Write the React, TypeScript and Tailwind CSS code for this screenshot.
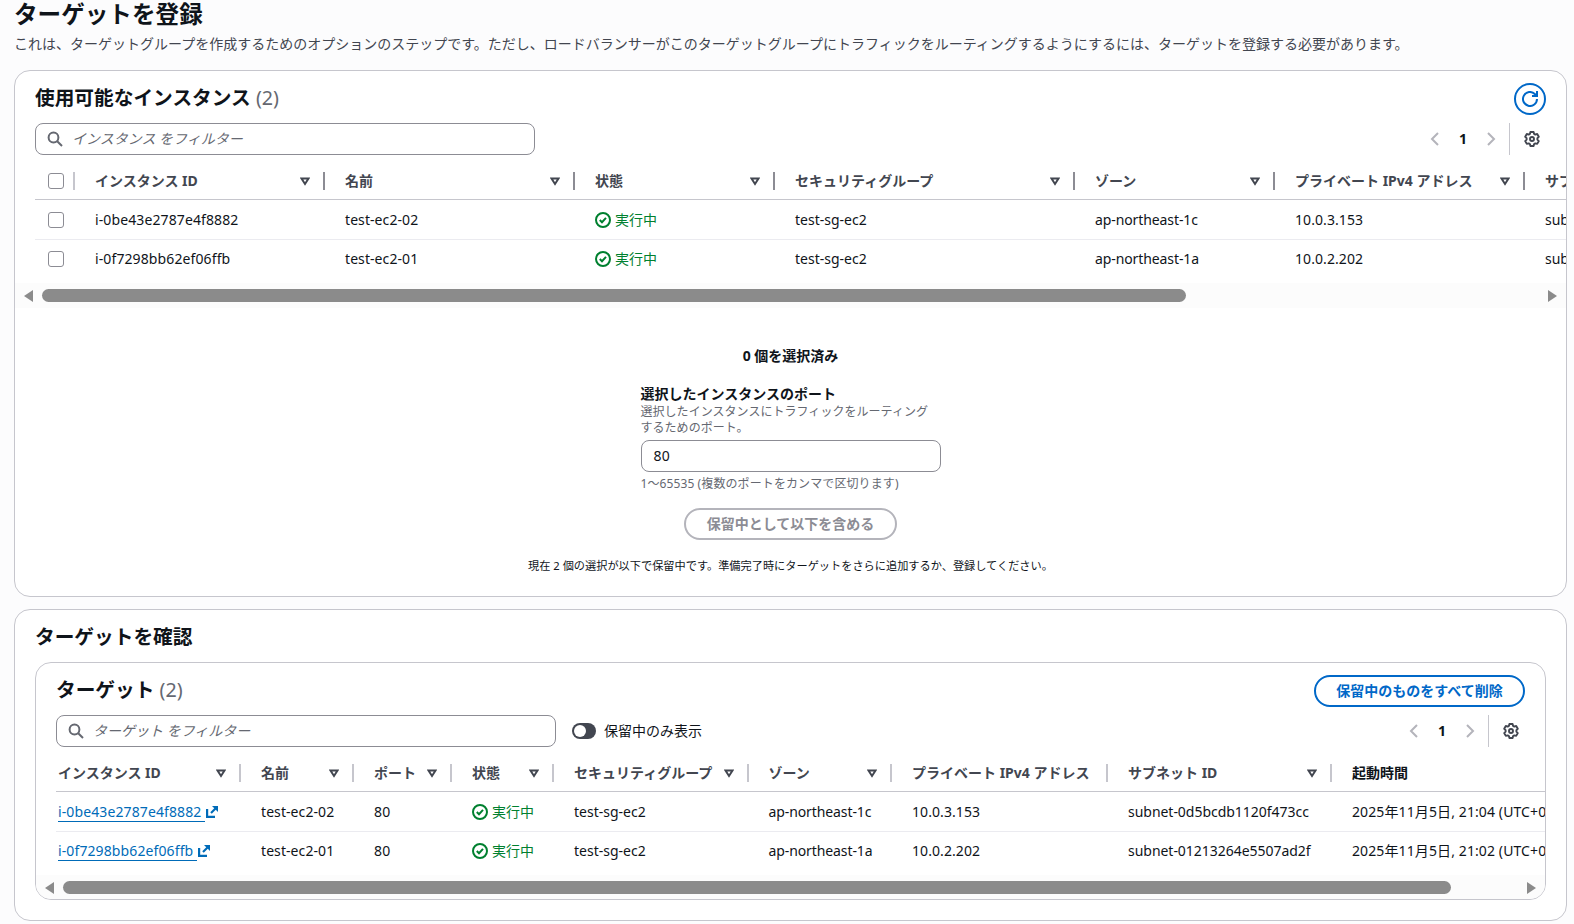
import type { ReactNode } from "react"
import { clsx } from "clsx"

type Column = { label: string; width: string; sort?: boolean; active?: boolean }

function SearchIcon() {
  return (
    <svg viewBox="0 0 16 16" className="size-4 shrink-0" fill="none" stroke="#656871" strokeWidth="2">
      <circle cx="6.5" cy="6.5" r="4.9" />
      <path d="M10.2 10.2 15 15" />
    </svg>
  )
}

function GearIcon() {
  return (
    <svg viewBox="0 0 16 16" className="size-4" fill="none" stroke="#424650" strokeWidth="1.9" strokeLinejoin="round">
      <path d="M6.4 1h3.2l.5 1.9 1.2.7 1.9-.6 1.6 2.8-1.4 1.4v1.5l1.4 1.4-1.6 2.8-1.9-.5-1.2.7-.5 1.9H6.4l-.5-1.9-1.2-.7-1.9.5-1.6-2.8 1.4-1.4V7.2L1.2 5.8 2.8 3l1.9.6 1.2-.7z" />
      <circle cx="8" cy="8" r="2" />
    </svg>
  )
}

function RefreshIcon() {
  return (
    <svg viewBox="0 0 16 16" className="size-4" fill="none" stroke="#0068c8" strokeWidth="2">
      <path d="M15 8a7 7 0 1 1-2.2-5.1L15 5" />
      <path d="M10 5h5V0" />
    </svg>
  )
}

function CheckIcon() {
  return (
    <svg viewBox="0 0 16 16" className="size-4 shrink-0" fill="none" stroke="#00802f" strokeWidth="2">
      <circle cx="8" cy="8" r="7" />
      <path d="m4.8 8 2.2 2.2 4-4.3" />
    </svg>
  )
}

function ExternalIcon() {
  return (
    <svg viewBox="0 0 14 14" className="size-3.5 shrink-0" fill="none" stroke="#006bb8" strokeWidth="2.2">
      <path d="M2.1 4v7.9H10" />
      <path d="m6 8 5.500-5.500" />
      <path d="M7 1h6v6z" fill="#006bb8" stroke="none" />
    </svg>
  )
}

function SortIcon() {
  return (
    <svg viewBox="0 0 10 9" className="mt-px h-[9px] w-2.5 shrink-0" fill="none" stroke="#424650" strokeWidth="2">
      <path d="M1.5 1.5h7L5 7z" />
    </svg>
  )
}

function Panel({ children, className }: { children: ReactNode; className?: string }) {
  return (
    <section className={clsx("overflow-hidden rounded-2xl border border-[#c6c6cd] bg-white", className)}>
      {children}
    </section>
  )
}

function SearchBox({ placeholder }: { placeholder: string }) {
  return (
    <div className="flex h-8 w-[500px] items-center gap-[9px] rounded-lg border border-[#8c8c94] px-[11px]">
      <SearchIcon />
      <span className="text-[#656871] italic">{placeholder}</span>
    </div>
  )
}

function Pager() {
  return (
    <div className="flex h-8 items-center">
      <svg viewBox="0 0 10 16" className="h-4 w-2.5" fill="none" stroke="#b4b4bb" strokeWidth="2">
        <path d="M8 2 2 8l6 6" />
      </svg>
      <span className="w-[46px] text-center font-bold">1</span>
      <svg viewBox="0 0 10 16" className="h-4 w-2.5" fill="none" stroke="#b4b4bb" strokeWidth="2">
        <path d="m2 2 6 6-6 6" />
      </svg>
      <span className="mr-3.5 ml-[13px] h-8 w-px bg-[#c6c6cd]" />
      <GearIcon />
    </div>
  )
}

function Checkbox() {
  return <span className="size-4 shrink-0 rounded-[3px] border border-[#8c8c94] bg-white" />
}

function HeaderCells({ columns, dark }: { columns: Column[]; dark?: boolean }) {
  return (
    <>
      {columns.map(c => (
        <div key={c.label} className={clsx("flex shrink-0 items-center justify-between", c.width)}>
          <span className={clsx("font-bold", c.active ? "text-[#0f141a]" : "text-[#424650]")}>{c.label}</span>
          <span className="flex items-center gap-[13px]">
            {c.sort === false ? null : <SortIcon />}
            <span className={clsx("mr-5 h-[18px] w-0.5", dark ? "bg-[#8c8c94]" : "bg-[#c6c6cd]")} />
          </span>
        </div>
      ))}
    </>
  )
}

function Status() {
  return (
    <span className="flex items-center gap-1 text-[#00802f]">
      <CheckIcon />
      実行中
    </span>
  )
}

function Scrollbar({ thumb }: { thumb: string }) {
  return (
    <div className="mt-1.5 flex h-[25px] items-center justify-between bg-[#fcfcfc] px-[9px]">
      <div className="flex items-center gap-[9px]">
        <span className="border-y-[6px] border-r-[9px] border-y-transparent border-r-[#8b8b8b]" />
        <span className={clsx("h-[13px] rounded-full bg-[#8b8b8b]", thumb)} />
      </div>
      <span className="border-y-[6px] border-l-[9px] border-y-transparent border-l-[#8b8b8b]" />
    </div>
  )
}

const instanceColumns: Column[] = [
  { label: "インスタンス ID", width: "w-[250px]" },
  { label: "名前", width: "w-[250px]" },
  { label: "状態", width: "w-[200px]" },
  { label: "セキュリティグループ", width: "w-[300px]" },
  { label: "ゾーン", width: "w-[200px]" },
  { label: "プライベート IPv4 アドレス", width: "w-[250px]" },
  { label: "サブネット ID", width: "w-[250px]" }
]

const targetColumns: Column[] = [
  { label: "インスタンス ID", width: "w-[203px]" },
  { label: "名前", width: "w-[113px]" },
  { label: "ポート", width: "w-[98px]" },
  { label: "状態", width: "w-[102px]" },
  { label: "セキュリティグループ", width: "w-[194.500px]" },
  { label: "ゾーン", width: "w-[143.500px]" },
  { label: "プライベート IPv4 アドレス", width: "w-[216px]", sort: false },
  { label: "サブネット ID", width: "w-[224px]" },
  { label: "起動時間", width: "w-[300px]", sort: false, active: true }
]

const rows = [
  {
    id: "i-0be43e2787e4f8882",
    name: "test-ec2-02",
    zone: "ap-northeast-1c",
    ip: "10.0.3.153",
    subnet: "subnet-0d5bcdb1120f473cc",
    launched: "2025年11月5日, 21:04 (UTC+09:00)"
  },
  {
    id: "i-0f7298bb62ef06ffb",
    name: "test-ec2-01",
    zone: "ap-northeast-1a",
    ip: "10.0.2.202",
    subnet: "subnet-01213264e5507ad2f",
    launched: "2025年11月5日, 21:02 (UTC+09:00)"
  }
]

function Row({ cells, columns, lead, first }: { cells: ReactNode[]; columns: Column[]; lead?: ReactNode; first: boolean }) {
  return (
    <div
      className={clsx(
        "flex items-center whitespace-nowrap",
        first ? "h-10 border-b border-[#ebebf0]" : "h-[37px]",
        lead ? "pl-[13px]" : "pl-0.5"
      )}
    >
      {lead}
      {cells.map((cell, i) => (
        <div key={columns[i].label} className={clsx("shrink-0", columns[i].width)}>
          {cell}
        </div>
      ))}
    </div>
  )
}

function AvailableInstances() {
  const lead = (
    <div className="flex w-[47px] shrink-0">
      <Checkbox />
    </div>
  )

  return (
    <Panel className="h-[527px]">
      <div className="flex h-[52px] items-start justify-between pt-3 pr-5 pl-5">
        <h2 className="text-[19.7px] leading-[30px] font-bold">
          使用可能なインスタンス <span className="font-normal text-[#656871]">(2)</span>
        </h2>
        <button className="flex size-8 items-center justify-center rounded-full border-2 border-[#0068c8]">
          <RefreshIcon />
        </button>
      </div>
      <div className="flex items-center justify-between pr-[26px] pl-5">
        <SearchBox placeholder="インスタンス をフィルター" />
        <Pager />
      </div>
      <div className="ml-5 overflow-hidden">
        <div className="flex h-[45px] items-center border-b border-[#c6c6cd] pt-[7px] pl-[13px] whitespace-nowrap">
          <div className="flex w-[47px] shrink-0 items-center gap-[9px]">
            <Checkbox />
            <span className="h-[18px] w-0.5 bg-[#c6c6cd]" />
          </div>
          <HeaderCells columns={instanceColumns} dark />
        </div>
        {rows.map((r, i) => (
          <Row
            key={r.id}
            first={i === 0}
            lead={lead}
            columns={instanceColumns}
            cells={[
              <span className="tracking-[0.11px]">{r.id}</span>,
              <span className="tracking-[0.08px]">{r.name}</span>,
              <Status />,
              "test-sg-ec2",
              <span className="tracking-[-0.1px]">{r.zone}</span>,
              <span className="tracking-[0.08px]">{r.ip}</span>,
              r.subnet
            ]}
          />
        ))}
      </div>
      <Scrollbar thumb="w-[1144px]" />

      <div className="flex flex-col items-center">
        <p className="mt-[38px] leading-5 font-bold">0 個を選択済み</p>
        <div className="mt-[18px] w-[300px]">
          <p className="leading-5 font-bold">選択したインスタンスのポート</p>
          <p className="pr-2 text-xs leading-4 tracking-[0.04px] text-[#656871]">
            選択したインスタンスにトラフィックをルーティングするためのポート。
          </p>
          <div className="mt-1 flex h-8 items-center rounded-lg border border-[#8c8c94] px-3 tracking-[0.2px]">80</div>
          <p className="mt-1 text-xs leading-4 tracking-[0.1px] text-[#656871]">
            1〜65535 (複数のポートをカンマで区切ります)
          </p>
        </div>
        <button className="mt-4 h-8 w-[213px] rounded-full border-2 border-[#b4b4bb] font-bold text-[#8c8c94]">
          保留中として以下を含める
        </button>
        <p className="mt-4 text-[11.2px] leading-5">
          現在 2 個の選択が以下で保留中です。準備完了時にターゲットをさらに追加するか、登録してください。
        </p>
      </div>
    </Panel>
  )
}

function Targets() {
  return (
    <Panel className="mx-5 h-[238px]">
      <div className="flex h-[52px] items-start justify-between px-5 pt-3">
        <h2 className="text-[19.7px] leading-[30px] font-bold">
          ターゲット <span className="font-normal text-[#656871]">(2)</span>
        </h2>
        <button className="h-8 w-[211px] rounded-full border-2 border-[#0068c8] font-bold text-[#0068c8]">
          保留中のものをすべて削除
        </button>
      </div>
      <div className="flex items-center justify-between pr-[26px] pl-5">
        <div className="flex items-center">
          <SearchBox placeholder="ターゲット をフィルター" />
          <span className="ml-4 flex h-4 w-6 items-center rounded-full bg-[#424650] px-0.5">
            <span className="size-3 rounded-full bg-white" />
          </span>
          <span className="ml-2">保留中のみ表示</span>
        </div>
        <Pager />
      </div>
      <div className="ml-5 overflow-hidden">
        <div className="flex h-[45px] items-center border-b border-[#c6c6cd] pt-[7px] pl-0.5 whitespace-nowrap">
          <HeaderCells columns={targetColumns} />
        </div>
        {rows.map((r, i) => (
          <Row
            key={r.id}
            first={i === 0}
            columns={targetColumns}
            cells={[
              <a className="flex items-center pt-px text-[#006bb8]">
                <span className="border-b border-[#006bb8] pr-1 leading-[19px] tracking-[0.11px]">{r.id}</span>
                <ExternalIcon />
              </a>,
              <span className="tracking-[0.08px]">{r.name}</span>,
              <span className="tracking-[0.2px]">80</span>,
              <Status />,
              "test-sg-ec2",
              <span className="tracking-[-0.1px]">{r.zone}</span>,
              <span className="tracking-[0.08px]">{r.ip}</span>,
              <span className="tracking-[-0.03px]">{r.subnet}</span>,
              <span className="tracking-[0.11px]">{r.launched}</span>
            ]}
          />
        ))}
      </div>
      <Scrollbar thumb="w-[1388px]" />
    </Panel>
  )
}

export default function App() {
  return (
    <main className="h-[924px] overflow-hidden bg-[#fcfcfd] pr-[7px] pl-3.5 font-['Noto_Sans','Noto_Sans_CJK_JP',sans-serif] text-sm leading-5 text-[#0f141a]">
      <h1 className="h-[30px] text-[23.6px] leading-7 font-bold">ターゲットを登録</h1>
      <p className="mt-1 text-[#424650]">
        これは、ターゲットグループを作成するためのオプションのステップです。ただし、ロードバランサーがこのターゲットグループにトラフィックをルーティングするようにするには、ターゲットを登録する必要があります。
      </p>
      <div className="mt-4 flex flex-col gap-3">
        <AvailableInstances />
        <Panel className="h-[312px]">
          <h2 className="px-5 pt-3 pb-2.5 text-[19.7px] leading-[30px] font-bold">ターゲットを確認</h2>
          <Targets />
        </Panel>
      </div>
    </main>
  )
}
